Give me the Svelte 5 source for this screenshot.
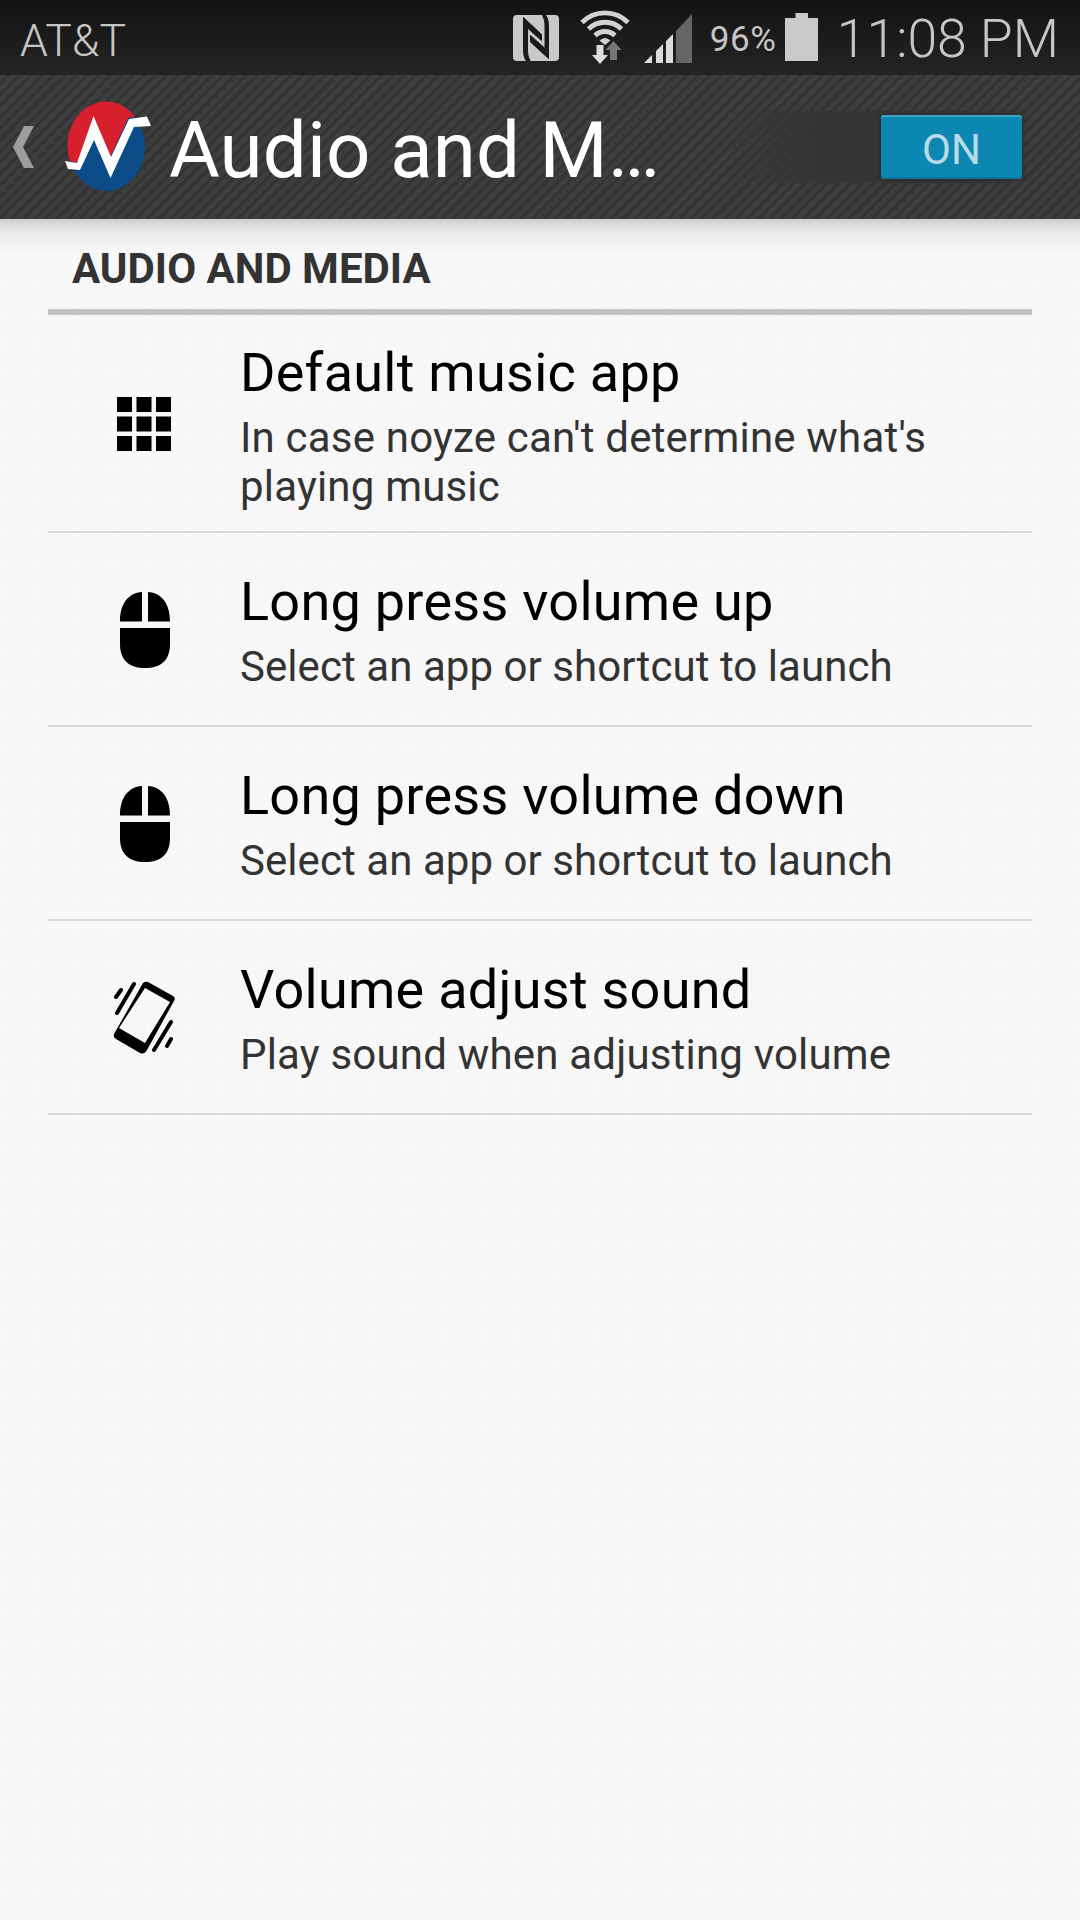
<script lang="ts">
  type Item = { icon: 'apps' | 'mouse' | 'vibrate'; title: string; summary: string }

  const items: Item[] = [
    { icon: 'apps', title: 'Default music app', summary: "In case noyze can't determine what's playing music" },
    { icon: 'mouse', title: 'Long press volume up', summary: 'Select an app or shortcut to launch' },
    { icon: 'mouse', title: 'Long press volume down', summary: 'Select an app or shortcut to launch' },
    { icon: 'vibrate', title: 'Volume adjust sound', summary: 'Play sound when adjusting volume' }
  ]

  let enabled = $state(true)
</script>

<div class="screen">
  <div class="status-bar">
    <span class="carrier">AT&amp;T</span>
    <div class="status-icons">
      <svg class="nfc" width="46" height="46" viewBox="0 0 46 46">
        <rect width="46" height="46" rx="4" fill="#c9c9c9" />
        <g fill="#1a1a1a" stroke="#1a1a1a" stroke-width="1">
          <path d="M10.500 2.500L28.500 19.500V25.500L14.500 13V34C14.500 39 15 42 17 45.500H13C11 42 10.500 39 10.500 34Z" />
          <path d="M35.500 43.500L17.500 27V20.500L32 33.500V12C32 7 31.500 4 29.500 0.500H33C35 4 35.500 7 35.500 12Z" />
        </g>
      </svg>
      <svg class="wifi" width="50" height="54" viewBox="0 0 50 54">
        <g fill="none" stroke="#d2d2d2" stroke-width="4.800">
          <path d="M2 12.500A32.500 32.500 0 0 1 48 12.500" />
          <path d="M8.500 19A23.500 23.500 0 0 1 41.500 19" />
          <path d="M15 25.500A14.500 14.500 0 0 1 35 25.500" />
        </g>
        <path d="M19.500 30.500Q25 25.500 30.500 30.500L25 35Z" fill="#d2d2d2" />
        <path d="M16.500 35H23.500V45H28L20 54L12 45H16.500Z" fill="#dedede" />
        <path d="M30 50H37V40H41.500L33.500 31L25.500 40H30Z" fill="#777" />
      </svg>
      <svg class="signal" width="48" height="49" viewBox="0 0 48 49">
        <path d="M0 49L8 41V49Z M12 49V37L19 30V49Z M22 49V27L29 20V49Z" fill="#dcdcdc" />
        <path d="M32 49V17L48 0V49Z" fill="#666" />
      </svg>
      <span class="percent">96%</span>
      <svg class="battery" width="33" height="48" viewBox="0 0 33 48">
        <path d="M0 5H10.500V0H23V5H33V48H0Z" fill="#c9c9c9" />
      </svg>
      <span class="clock">11:08 PM</span>
    </div>
  </div>

  <header class="action-bar">
    <svg class="up" width="21" height="42" viewBox="0 0 21 42">
      <path d="M11 0H21L10 21L21 42H11L0 21Z" fill="#9d9d9d" />
    </svg>
    <svg class="logo" width="88" height="92" viewBox="0 0 88 92">
      <ellipse cx="41.500" cy="46" rx="38.500" ry="44" fill="#0b4c88" />
      <path d="M5 60A38.500 44 0 0 1 70 15.500L63 17L45 57L29 18L13 62Z" fill="#d81f2d" />
      <path d="M0 60L12 62L28.500 15L46 56L64 18L82 15.500L86 25L69 26L45.500 77L29 39L15 69L3 68Z" fill="#fff" />
    </svg>
    <h1>Audio and M…</h1>
    <button class="switch" class:off={!enabled} type="button" onclick={() => (enabled = !enabled)}>
      <span class="thumb">{enabled ? 'ON' : 'OFF'}</span>
    </button>
  </header>

  <main>
    <h2>AUDIO AND MEDIA</h2>
    <ul>
      {#each items as item}
        <li>
          <div class="icon">
            {#if item.icon === 'apps'}
              <svg width="64" height="64" viewBox="0 0 64 64">
                {#each [0, 1, 2] as row}
                  {#each [0, 1, 2] as col}
                    <rect x={5 + col * 19.5} y={5 + row * 19.5} width="15" height="15" />
                  {/each}
                {/each}
              </svg>
            {:else if item.icon === 'mouse'}
              <svg width="54" height="78" viewBox="-2 0 54 78">
                <path d="M23 1V30.500H1C1 13 9 2 23 1Z M29 1V30.500H51C51 13 43 2 29 1Z" />
                <path d="M1 37H51V53C51 69 42 77 26 77S1 69 1 53Z" />
              </svg>
            {:else}
              <svg width="66" height="74" viewBox="-2 0 66 74">
                <path
                  fill-rule="evenodd"
                  d="M30 2Q32 0 35 1L60 15Q63 17 61 20L34 69Q31 74 27 72L3 58Q0 56 1 53Z M32 7L6 47L32 62L57 21Z"
                />
                <path d="M21 3L4 32M8 9L3 16M58 41L41 69M58 58L54 65" fill="none" stroke="#000" stroke-width="4" stroke-linecap="round" />
              </svg>
            {/if}
          </div>
          <div class="text">
            <div class="title">{item.title}</div>
            <div class="summary">{item.summary}</div>
          </div>
        </li>
      {/each}
    </ul>
  </main>
</div>

<style>
  :global(body) {
    margin: 0;
  }

  .screen {
    display: flex;
    flex-direction: column;
    width: 1080px;
    height: 1920px;
    overflow: hidden;
    font-family: Roboto, 'Noto Sans', sans-serif;
    background: #f8f8f8;
  }

  /* Status bar */
  .status-bar {
    display: flex;
    align-items: center;
    justify-content: space-between;
    box-sizing: border-box;
    height: 75px;
    padding: 0 21px 0 20px;
    background: linear-gradient(#131313, #242424);
    color: #c6c6c6;
    white-space: nowrap;
  }

  .carrier {
    padding-top: 7px;
    font-size: 44.500px;
    font-weight: 300;
    letter-spacing: 0.2px;
  }

  .status-icons {
    display: flex;
    align-items: flex-start;
    height: 75px;
  }

  .nfc {
    margin: 15px 21px 0 0;
  }

  .wifi {
    margin: 10px 14px 0 0;
  }

  .signal {
    margin: 14px 18px 0 0;
  }

  .percent {
    width: 66px;
    margin: 19px 9px 0 0;
    font-size: 35px;
    line-height: 42px;
    letter-spacing: 0.5px;
  }

  .battery {
    margin: 13px 19px 0 0;
  }

  .clock {
    font-size: 53.500px;
    font-weight: 300;
    line-height: 78px;
  }

  /* Action bar */
  .action-bar {
    display: flex;
    align-items: center;
    box-sizing: border-box;
    height: 144px;
    padding: 0 54px 0 13px;
    background: repeating-linear-gradient(135deg, #3d3d3d 0 4px, #323232 5.500px 6.500px, #3d3d3d 8px);
    color: #fff;
  }

  .logo {
    margin-left: 31px;
  }

  h1 {
    flex: 1;
    margin: 7px 0 0 16px;
    font-size: 78px;
    font-weight: 400;
    line-height: 92px;
    letter-spacing: 0.15px;
    white-space: nowrap;
  }

  .switch {
    display: flex;
    justify-content: flex-end;
    width: 292px;
    padding: 4px;
    border: 0;
    border-radius: 4px;
    background: linear-gradient(90deg, rgba(54, 54, 54, 0.2), #353535 30%, #353535 80%, transparent);
    font: inherit;
  }

  .switch.off {
    justify-content: flex-start;
  }

  .thumb {
    box-sizing: border-box;
    width: 141px;
    height: 64px;
    padding-top: 3px;
    border-radius: 3px;
    background: #0c87b2;
    box-shadow: inset 0 2px #3ba4c8, inset 0 -2px #08779f, 0 0 4px #222;
    color: #b8dbe8;
    font-size: 42px;
    font-weight: 400;
    line-height: 64px;
    text-align: center;
  }

  .off .thumb {
    background: #666;
    box-shadow: none;
  }

  /* Preference list */
  main {
    flex: 1;
    padding: 0 48px;
    background:
      linear-gradient(rgba(0, 0, 0, 0.17), rgba(0, 0, 0, 0.05) 14px, transparent 36px),
      repeating-linear-gradient(90deg, rgba(255, 255, 255, 0.25) 0 2px, transparent 2px 37px),
      repeating-linear-gradient(rgba(255, 255, 255, 0.25) 0 2px, transparent 2px 31px),
      #f7f7f7;
  }

  h2 {
    box-sizing: border-box;
    height: 96px;
    margin: 0;
    padding: 25px 24px 0;
    border-bottom: 6px solid #c3c3c3;
    color: #333;
    font-size: 42px;
    font-weight: 700;
    line-height: 49px;
    white-space: nowrap;
  }

  ul {
    margin: 0;
    padding: 0;
    list-style: none;
  }

  li {
    display: flex;
    align-items: center;
    box-sizing: border-box;
    min-height: 194px;
    padding: 23px 24px 20px;
    border-bottom: 2px solid #dadada;
  }

  .icon {
    display: flex;
    justify-content: center;
    width: 144px;
    padding-bottom: 2px;
  }

  .icon svg {
    display: block;
  }

  .text {
    flex: 1;
    margin-left: 24px;
  }

  li:not(:first-child) .text {
    padding-bottom: 3px;
  }

  .title {
    margin-bottom: 5px;
    color: #000;
    font-size: 54px;
    line-height: 70px;
    letter-spacing: 0.27px;
  }

  .summary {
    max-width: 720px;
    color: #333;
    font-size: 42px;
    line-height: 49px;
    letter-spacing: 0.06px;
  }

  li:first-child .summary,
  li:last-child .summary {
    letter-spacing: 0.19px;
  }
</style>
